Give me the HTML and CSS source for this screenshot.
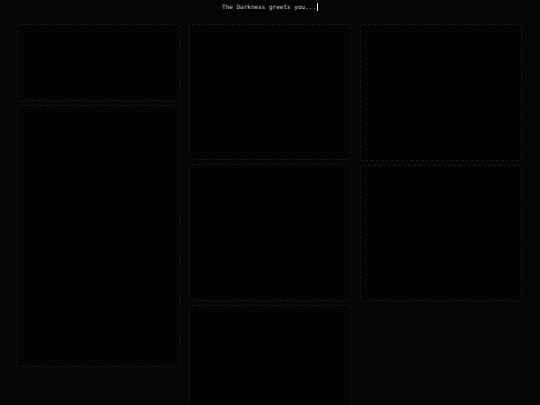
FILE: index.html
```html
<!DOCTYPE html>
<html>
<head>
<meta charset="utf-8">
<link rel="stylesheet" href="styles.css">
</head>
<body>
<header class="top">
  <span class="greet">The Darkness greets you...</span><span class="cursor"></span>
</header>
<main class="grid">
  <div class="col">
    <div class="card h76"></div>
    <div class="card h262"></div>
  </div>
  <div class="col">
    <div class="card h135"></div>
    <div class="card h136"></div>
    <div class="card h200"></div>
  </div>
  <div class="col">
    <div class="card h136"></div>
    <div class="card h135"></div>
  </div>
</main>
</body>
</html>
```
FILE: styles.css
```css
html, body {
  margin: 0;
  padding: 0;
  background: #050505;
  height: 100%;
  overflow: hidden;
}
.top {
  height: 24px;
  display: flex;
  justify-content: center;
  align-items: flex-start;
  padding-top: 3px;
  box-sizing: border-box;
  font-family: "DejaVu Sans Mono", monospace;
  font-size: 6px;
  line-height: 8px;
  color: #c8c8c8;
}
.greet {
  white-space: pre;
}
.cursor {
  display: inline-block;
  width: 1px;
  height: 8px;
  background: #f0f0f0;
  margin-left: 1px;
}
.grid {
  display: grid;
  grid-template-columns: 163px 162px 162px;
  column-gap: 9px;
  padding: 0 17px;
  align-items: start;
}
.col {
  display: flex;
  flex-direction: column;
  gap: 4px;
}
.card {
  border: 1px dashed #171717;
  border-radius: 3px;
  background: #030303;
  box-sizing: border-box;
}
.h76 { height: 77px; }
.h262 { height: 262px; }
.h135 { height: 136px; }
.h136 { height: 137px; }
.h200 { height: 200px; }
```
